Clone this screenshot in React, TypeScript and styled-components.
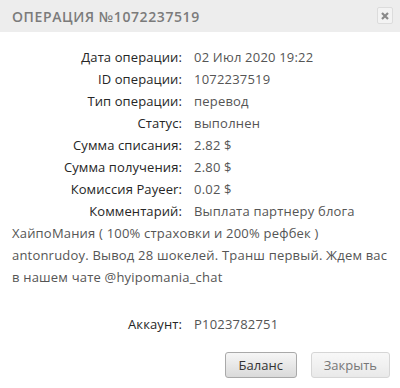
import React from "react";
import styled, { createGlobalStyle } from "styled-components";

const Global = createGlobalStyle`
  html, body { margin: 0; padding: 0; background: #fff; }
  body { font-family: "Open Sans", "DejaVu Sans", sans-serif; }
`;

const Dialog = styled.div`
  width: 400px;
  height: 388px;
  background: #fff;
  display: flex;
  flex-direction: column;
`;

const Header = styled.div`
  height: 32px;
  background: #ededed;
  display: flex;
  align-items: center;
  justify-content: space-between;
  padding: 0 7px 0 12px;
  box-sizing: border-box;
`;

const Title = styled.div`
  font-family: "Open Sans", sans-serif;
  font-size: 14px;
  font-weight: 600;
  letter-spacing: 0.6px;
  color: #7b7b7b;
  text-transform: uppercase;
`;

const CloseBtn = styled.button`
  width: 16px;
  height: 17px;
  padding: 0;
  border: 1px solid #dcdcdc;
  border-radius: 2px;
  background: #f3f3f3;
  display: flex;
  align-items: center;
  justify-content: center;
  margin-top: -1px;
`;

const Body = styled.div`
  padding: 14px 12px 0 12px;
  font-size: 13px;
  line-height: 22px;
  letter-spacing: 0.2px;
  color: #555;
`;

const Row = styled.div<{ $gapTop?: number }>`
  margin-top: ${(p) => p.$gapTop ?? 0}px;
`;

const Label = styled.span`
  display: inline-block;
  width: 170px;
  text-align: right;
  margin-right: 12px;
  color: #262626;
  font-weight: 500;
  letter-spacing: 0.1px;
`;

const Value = styled.span`
  color: #555;
`;

const Buttons = styled.div`
  display: flex;
  justify-content: flex-end;
  gap: 14px;
  padding: 17px 10px 0 0;
`;

const Button = styled.button<{ $primary?: boolean }>`
  height: 26px;
  padding: 0 12px;
  font-family: "Open Sans", sans-serif;
  font-size: 13px;
  border-radius: 3px;
  cursor: pointer;
  border: 1px solid ${(p) => (p.$primary ? "#a9a9a9" : "#d6d6d6")};
  color: ${(p) => (p.$primary ? "#333" : "#777")};
  background: ${(p) =>
    p.$primary
      ? "linear-gradient(#f6f6f6, #dadada)"
      : "linear-gradient(#f8f8f8, #e9e9e9)"};
  min-width: ${(p) => (p.$primary ? 72 : 79)}px;
`;

const rows: [string, string][] = [
  ["Дата операции:", "02 Июл 2020 19:22"],
  ["ID операции:", "1072237519"],
  ["Тип операции:", "перевод"],
  ["Статус:", "выполнен"],
  ["Сумма списания:", "2.82 $"],
  ["Сумма получения:", "2.80 $"],
  ["Комиссия Payeer:", "0.02 $"],
];

export default function App() {
  return (
    <Dialog>
      <Global />
      <Header>
        <Title>Операция №1072237519</Title>
        <CloseBtn aria-label="close">
          <svg width="8" height="8" viewBox="0 0 8 8">
            <path d="M1 1L7 7M7 1L1 7" stroke="#8a8a8a" strokeWidth="2.2" />
          </svg>
        </CloseBtn>
      </Header>
      <Body>
        {rows.map(([l, v]) => (
          <Row key={l}>
            <Label>{l}</Label>
            <Value>{v}</Value>
          </Row>
        ))}
        <Row>
          <Label>Комментарий:</Label>
          <Value>
            Выплата партнеру блога ХайпоМания ( 100% страховки и 200% рефбек )
            antonrudoy. Вывод 28 шокелей. Транш первый. Ждем вас в нашем чате
            @hyipomania_chat
          </Value>
        </Row>
        <Row $gapTop={25}>
          <Label>Аккаунт:</Label>
          <Value>P1023782751</Value>
        </Row>
      </Body>
      <Buttons>
        <Button $primary>Баланс</Button>
        <Button>Закрыть</Button>
      </Buttons>
    </Dialog>
  );
}
